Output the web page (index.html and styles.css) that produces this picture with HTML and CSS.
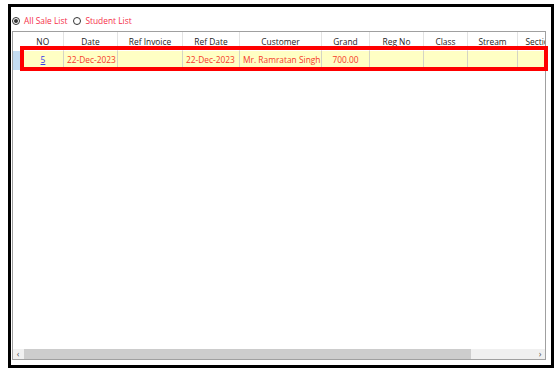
FILE: index.html
```html
<!DOCTYPE html>
<html lang="en">
<head>
  <meta charset="UTF-8" />
  <title>Sale List</title>
  <link rel="stylesheet" href="styles.css">
</head>
<body>
  <div class="frame">
    <div class="options">
      <label class="opt"><span class="radio checked"></span>All Sale List</label>
      <label class="opt"><span class="radio"></span>Student List</label>
    </div>

    <div class="grid">
      <div class="grid-body">
        <table class="list">
          <colgroup>
            <col style="width: 9px">
            <col style="width: 41px">
            <col style="width: 54px">
            <col style="width: 65px">
            <col style="width: 57px">
            <col style="width: 82px">
            <col style="width: 48px">
            <col style="width: 54px">
            <col style="width: 44px">
            <col style="width: 50px">
            <col style="width: 44px">
          </colgroup>
          <thead>
            <tr>
              <th class="rh"></th>
              <th>NO</th>
              <th>Date</th>
              <th>Ref Invoice</th>
              <th>Ref Date</th>
              <th>Customer</th>
              <th>Grand</th>
              <th>Reg No</th>
              <th>Class</th>
              <th>Stream</th>
              <th>Section</th>
            </tr>
          </thead>
          <tbody>
            <tr class="selected">
              <td class="rh"></td>
              <td class="c"><a href="#">5</a></td>
              <td>22-Dec-2023</td>
              <td></td>
              <td>22-Dec-2023</td>
              <td>Mr. Ramratan Singh</td>
              <td class="c">700.00</td>
              <td></td>
              <td></td>
              <td></td>
              <td></td>
            </tr>
          </tbody>
        </table>
      </div>

      <div class="hscroll">
        <span class="arrow">&#8249;</span>
        <div class="track"><div class="thumb"></div></div>
        <span class="arrow">&#8250;</span>
      </div>
    </div>

    <!-- рамка выделения строки -->
    <div class="mark"></div>
  </div>
</body>
</html>
```

FILE: styles.css
```css
body {
  margin: 0;
  padding: 4px 0 0 8px;
  background: #fff;
  font-family: 'Open Sans', 'Noto Sans', sans-serif;
  font-size: 8.4px;
  color: #222;
}

.frame {
  position: relative;
  box-sizing: border-box;
  width: 546px;
  height: 364px;
  border: 3px solid #000;
  padding: 0 5px 5px 1px;
  display: flex;
  flex-direction: column;
}

.options {
  height: 24px;
  display: flex;
  align-items: center;
  gap: 6px;
  padding-top: 3px;
  box-sizing: border-box;
}

.opt {
  display: flex;
  align-items: center;
  gap: 4px;
  color: #f5304a;
}

.radio {
  box-sizing: border-box;
  width: 8px;
  height: 8px;
  border: 1px solid #333;
  border-radius: 50%;
  background: #fff;
  position: relative;
}

.radio.checked::after {
  content: "";
  position: absolute;
  left: 1px;
  top: 1px;
  width: 4px;
  height: 4px;
  border-radius: 50%;
  background: #333;
}

.grid {
  flex: 1;
  border: 1px solid #a0a0a0;
  display: flex;
  flex-direction: column;
  overflow: hidden;
}

.grid-body {
  flex: 1;
  overflow: hidden;
}

.list {
  border-collapse: collapse;
  table-layout: fixed;
  width: 548px;
}

.list th {
  height: 18px;
  padding: 0 0 1px;
  font-weight: normal;
  color: #222;
  border-left: 1px solid #e3e3e3;
  text-align: center;
  white-space: nowrap;
  overflow: hidden;
}

.list th.rh,
.list th:nth-child(2) {
  border-left: none;
}

.list td {
  height: 17px;
  padding: 0 3px 1px;
  border: 1px solid #d4d4c4;
  border-top: none;
  white-space: nowrap;
  overflow: hidden;
}

.list tr.selected td {
  background: #ffffc4;
  color: #f53a2a;
}

.list tr.selected td.rh {
  background: #c4dcf2;
  border-color: #c4dcf2;
}

.list td.c {
  text-align: center;
}

.list a {
  color: #3a3ae6;
}

.hscroll {
  height: 10px;
  display: flex;
  align-items: center;
  background: #f0f0f0;
}

.arrow {
  width: 10px;
  text-align: center;
  font-size: 9px;
  line-height: 10px;
  color: #555;
}

.track {
  flex: 1;
  height: 100%;
  display: flex;
}

.thumb {
  width: 447px;
  background: #cdcdcd;
  margin-left: 1px;
}

.mark {
  position: absolute;
  left: 9px;
  top: 39px;
  width: 520px;
  height: 17px;
  border: 4px solid #f00;
}
```
